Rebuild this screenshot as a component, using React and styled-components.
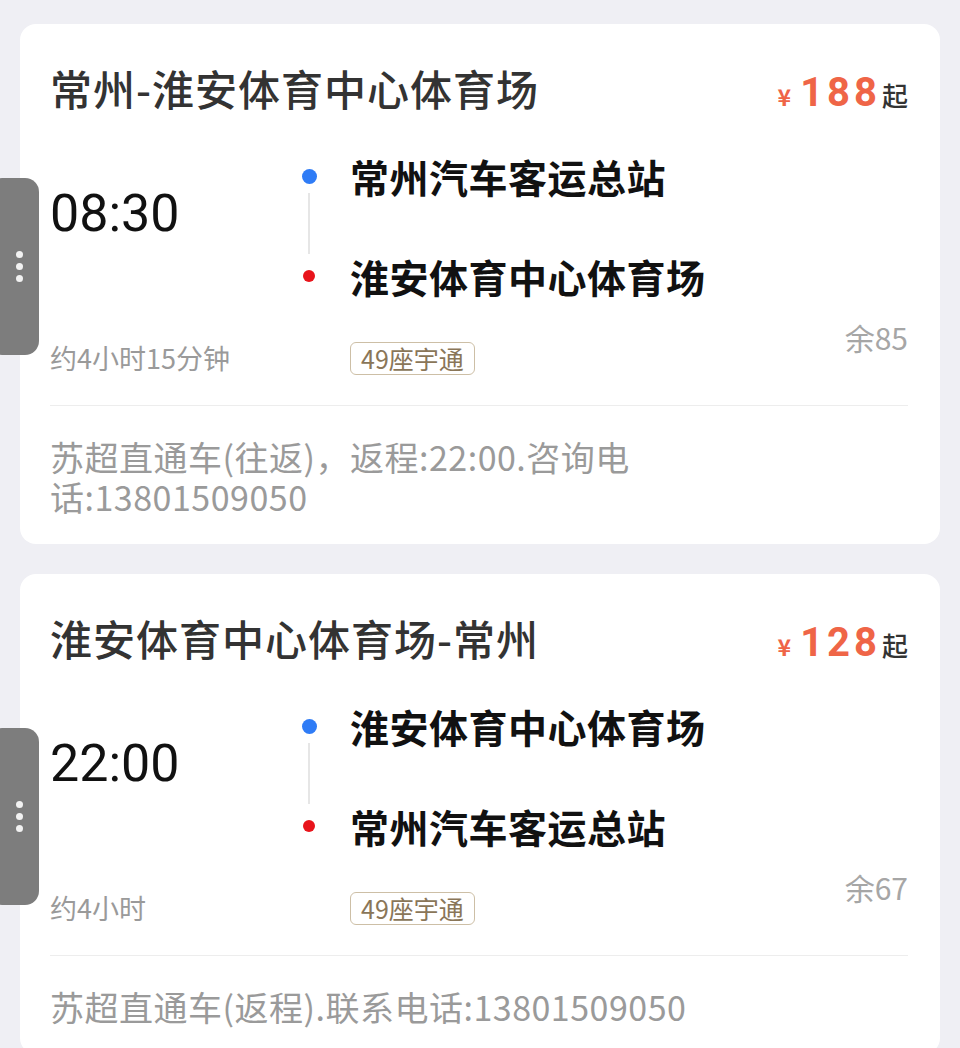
import React from "react";
import styled, { createGlobalStyle } from "styled-components";

const GlobalStyle = createGlobalStyle`
  html, body {
    margin: 0;
    padding: 0;
    background: #efeff4;
  }
  body {
    font-family: "Noto Sans CJK SC", "Noto Sans", sans-serif;
    color: #111;
  }
`;

// 차편 데이터
const trips = [
  {
    id: 1,
    title: "常州-淮安体育中心体育场",
    price: 188,
    time: "08:30",
    duration: "约4小时15分钟",
    from: "常州汽车客运总站",
    to: "淮安体育中心体育场",
    bus: "49座宇通",
    seats: 85,
    note: "苏超直通车(往返)，返程:22:00.咨询电话:13801509050",
  },
  {
    id: 2,
    title: "淮安体育中心体育场-常州",
    price: 128,
    time: "22:00",
    duration: "约4小时",
    from: "淮安体育中心体育场",
    to: "常州汽车客运总站",
    bus: "49座宇通",
    seats: 67,
    note: "苏超直通车(返程).联系电话:13801509050",
  },
];

const Page = styled.div`
  display: flex;
  flex-direction: column;
  gap: 30px;
  padding: 24px 20px;
`;

const Card = styled.div`
  position: relative;
  background: #fff;
  border-radius: 16px;
  padding: 36px 32px 27px 30px;
`;

const Handle = styled.div`
  position: absolute;
  left: -32px;
  top: 154px;
  width: 51px;
  height: 177px;
  border-radius: 14px;
  background: #7d7d7d;
  display: flex;
  flex-direction: column;
  align-items: flex-end;
  justify-content: center;
  gap: 5px;
  padding-right: 16px;
  box-sizing: border-box;
  span {
    width: 7px;
    height: 7px;
    border-radius: 50%;
    background: #f2f2f2;
  }
`;

const Header = styled.div`
  display: flex;
  justify-content: space-between;
  align-items: baseline;
  height: 56px;
  line-height: 56px;
`;

const Title = styled.div`
  font-size: 42px;
  font-weight: 500;
  color: #333;
  letter-spacing: 1px;
`;

const Price = styled.div`
  display: flex;
  align-items: baseline;
  color: #ef6547;
  .yen {
    font-size: 23px;
    font-weight: 700;
    margin-right: 9px;
  }
  .num {
    font-family: "Roboto", "Noto Sans", sans-serif;
    font-size: 40px;
    font-weight: 700;
    letter-spacing: 4px;
  }
  .from {
    font-size: 26px;
    font-weight: 500;
    color: #333;
    margin-left: 1px;
  }
`;

const Body = styled.div`
  display: flex;
  margin-top: 35px;
`;

const LeftCol = styled.div`
  width: 248px;
  display: flex;
  flex-direction: column;
  justify-content: space-between;
`;

const Time = styled.div`
  font-family: "Roboto", "Noto Sans", sans-serif;
  font-size: 52px;
  line-height: 60px;
  margin-top: 33px;
  color: #111;
`;

const Duration = styled.div`
  font-size: 27px;
  line-height: 34px;
  color: #9a9a9a;
`;

const Route = styled.div`
  flex: 1;
  display: grid;
  grid-template-columns: 22px auto;
  grid-template-rows: 50px 50px auto;
  column-gap: 30px;
  row-gap: 50px;
  align-content: start;
`;

const Marker = styled.div`
  position: relative;
  display: flex;
  align-items: center;
  justify-content: center;
  &::before {
    content: "";
    width: ${(p) => p.size}px;
    height: ${(p) => p.size}px;
    border-radius: 50%;
    background: ${(p) => p.color};
  }
  ${(p) =>
    p.line &&
    `
    &::after {
      content: "";
      position: absolute;
      left: 10px;
      top: 42px;
      width: 2px;
      height: 61px;
      background: #e6e6e6;
    }
  `}
`;

const Station = styled.div`
  font-size: 39px;
  font-weight: 700;
  line-height: 50px;
  color: #111;
  letter-spacing: 0.5px;
`;

const Tag = styled.div`
  grid-column: 2;
  justify-self: start;
  margin-top: -9px;
  height: 33px;
  box-sizing: border-box;
  padding: 0 10px;
  border: 1.5px solid #cdbfa6;
  border-radius: 6px;
  font-size: 25px;
  line-height: 30px;
  color: #8a7658;
`;

const Seats = styled.div`
  align-self: flex-end;
  margin-bottom: 21px;
  font-size: 30px;
  line-height: 34px;
  color: #a6a6a6;
`;

const Divider = styled.div`
  height: 1px;
  background: #ededed;
  margin-top: 30px;
`;

const Note = styled.div`
  margin-top: 31px;
  max-width: 760px;
  font-size: 34px;
  line-height: 40px;
  letter-spacing: 0.5px;
  color: #9a9a9a;
`;

const TripCard = ({ trip }) => (
  <Card>
    <Handle>
      <span />
      <span />
      <span />
    </Handle>
    <Header>
      <Title>{trip.title}</Title>
      <Price>
        <span className="yen">¥</span>
        <span className="num">{trip.price}</span>
        <span className="from">起</span>
      </Price>
    </Header>
    <Body>
      <LeftCol>
        <Time>{trip.time}</Time>
        <Duration>{trip.duration}</Duration>
      </LeftCol>
      <Route>
        <Marker color="#2f7cf6" size={15} line />
        <Station>{trip.from}</Station>
        <Marker color="#e8141b" size={12} />
        <Station>{trip.to}</Station>
        <Tag>{trip.bus}</Tag>
      </Route>
      <Seats>余{trip.seats}</Seats>
    </Body>
    <Divider />
    <Note>{trip.note}</Note>
  </Card>
);

const App = () => {
  return (
    <Page>
      <GlobalStyle />
      {trips.map((trip) => (
        <TripCard key={trip.id} trip={trip} />
      ))}
    </Page>
  );
};

export default App;
